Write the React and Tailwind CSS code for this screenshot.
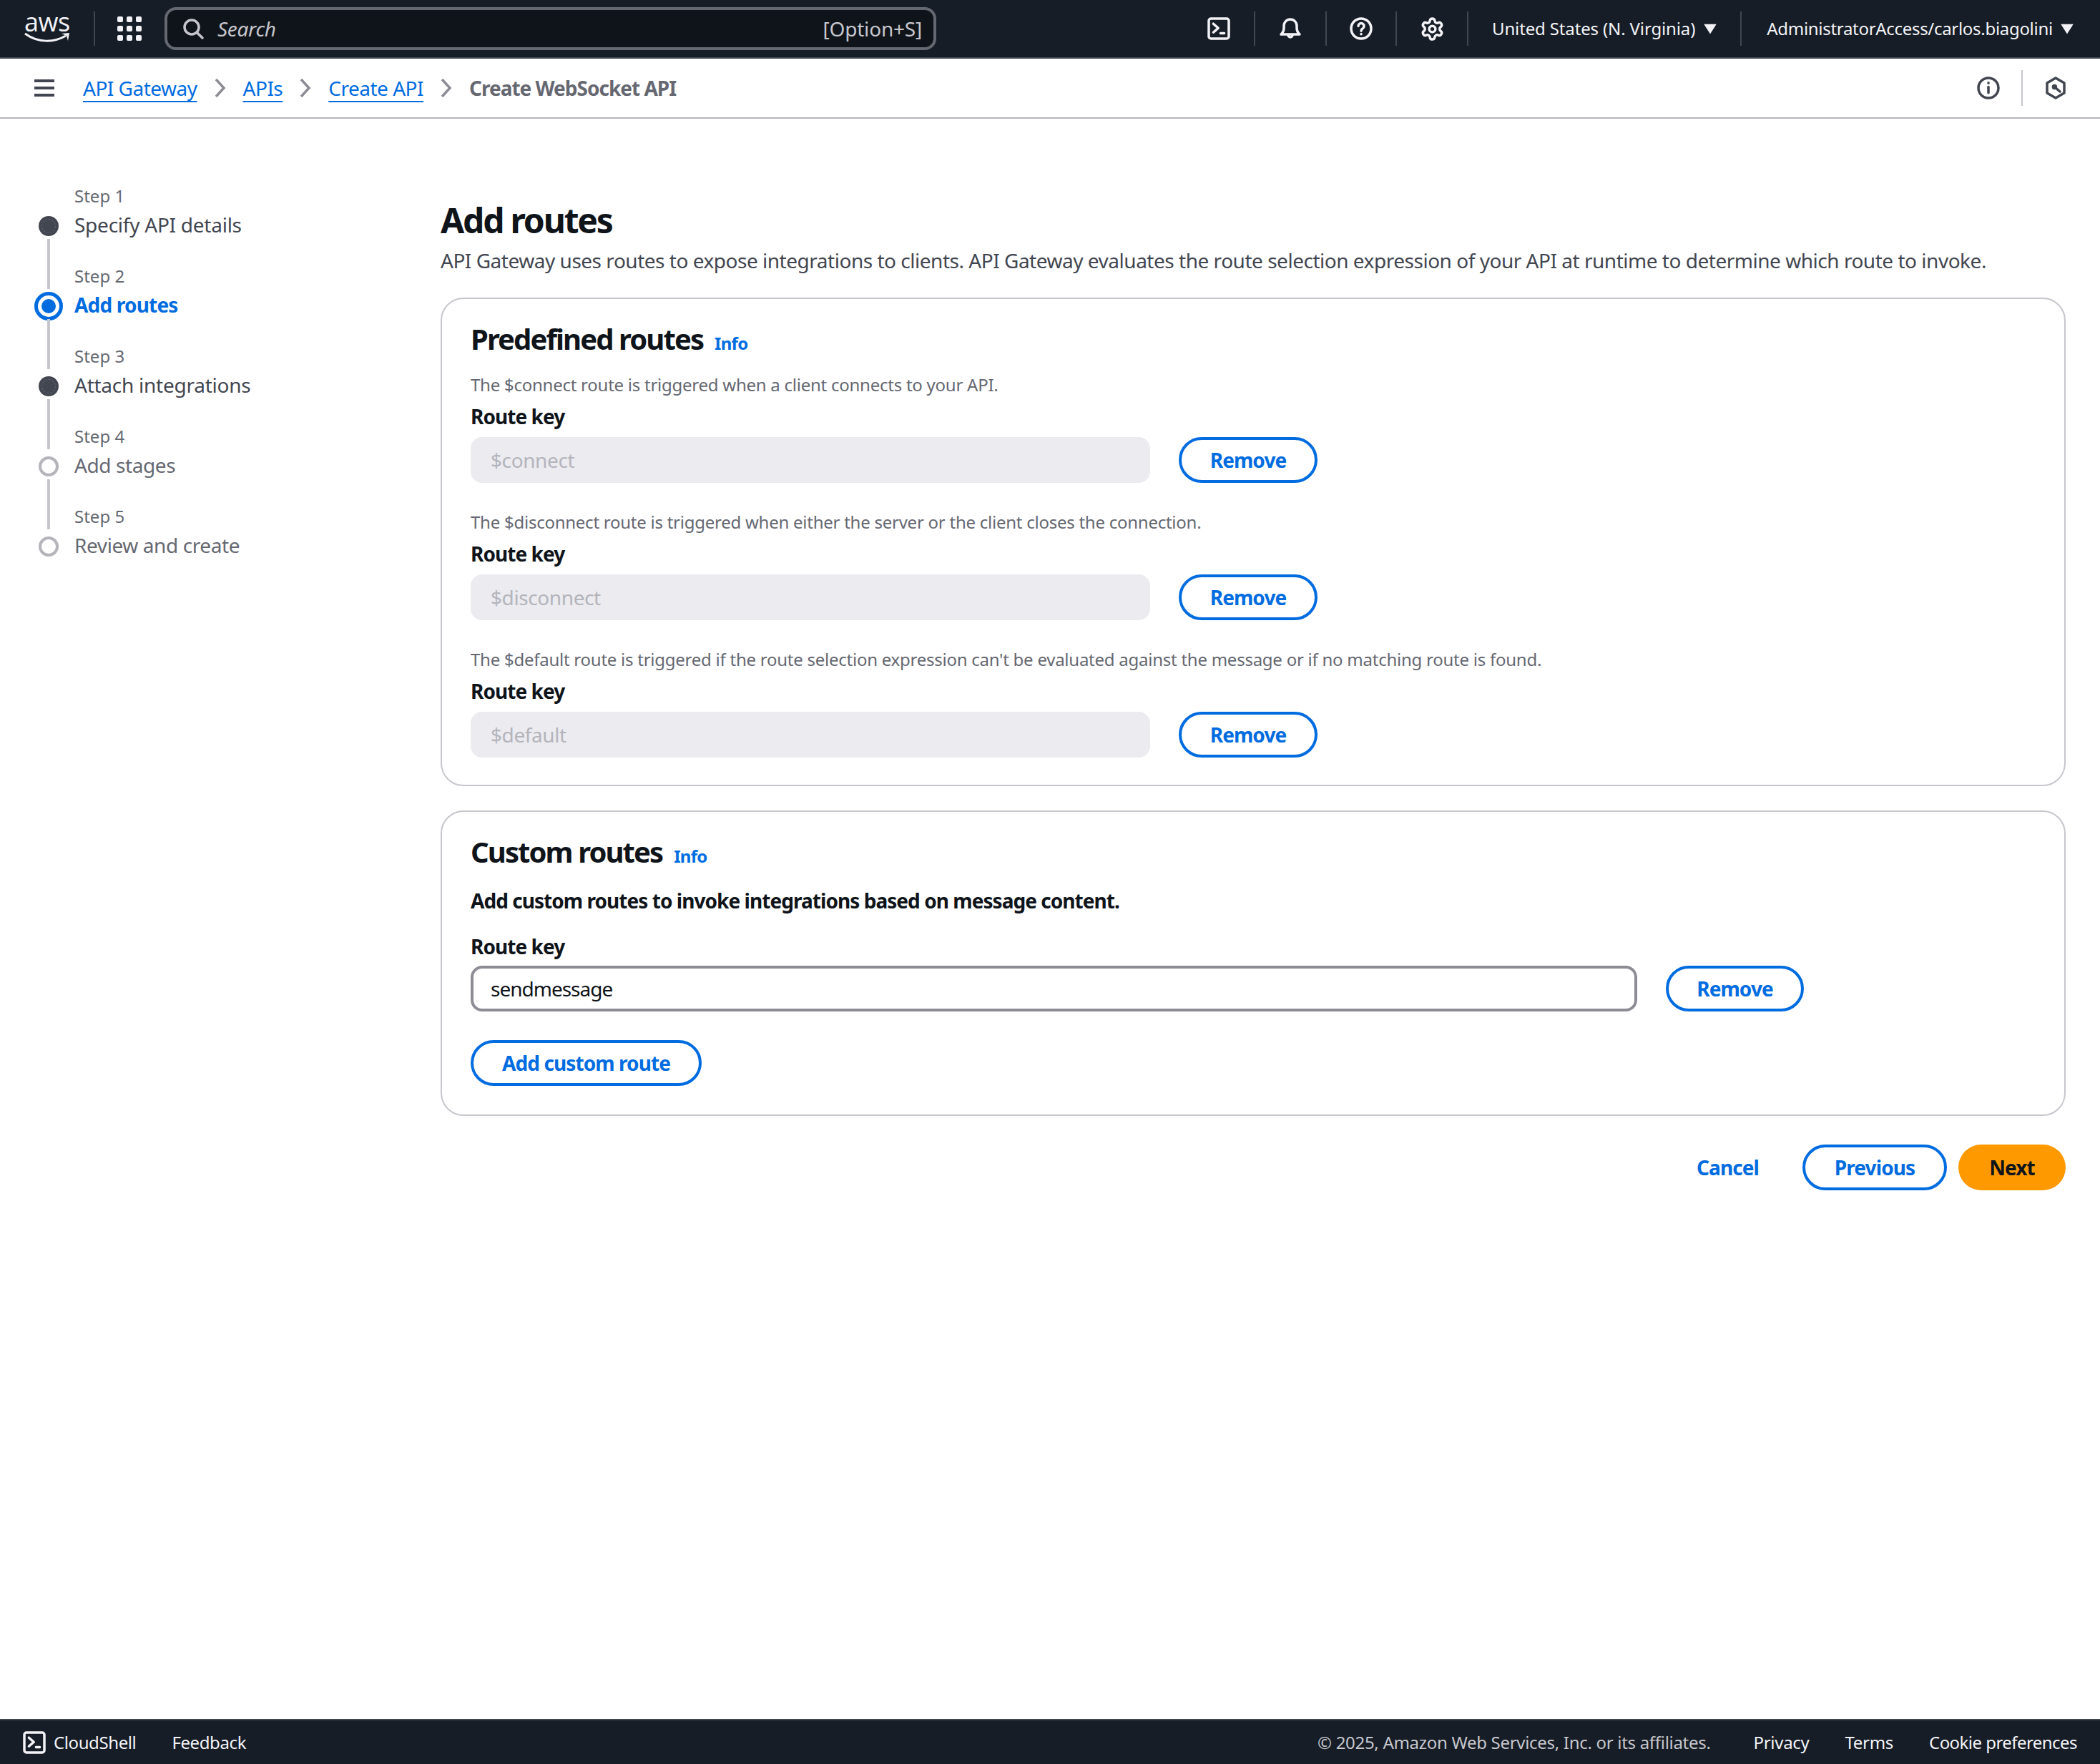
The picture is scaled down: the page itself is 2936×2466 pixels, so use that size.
import React from 'react';
import { Settings } from 'lucide-react';

const font = { fontFamily: '"Noto Sans", sans-serif' };

function Icon({ children, className = 'w-8 h-8' }) {
  return (
    <svg viewBox="0 0 16 16" fill="none" stroke="currentColor" strokeWidth="1.75" strokeLinecap="round" strokeLinejoin="round" className={className}>
      {children}
    </svg>
  );
}

const TerminalIcon = ({ className }) => (
  <Icon className={className}>
    <rect x="1" y="1" width="14" height="14" rx="1.5" />
    <path d="M4.2 4.6 7.6 7.6 4.2 10.6M9.2 11.2h2.6" />
  </Icon>
);

const Caret = () => (
  <svg viewBox="0 0 16 16" className="w-5 h-5 fill-[#f3f3f7]"><path d="M1 3h14L8 14z" /></svg>
);

const Chevron = () => (
  <svg viewBox="0 0 16 28" className="w-4 h-7 text-[#8c8c94]" fill="none" stroke="currentColor" strokeWidth="3.5"><path d="M2 2 13 14 2 26" /></svg>
);

const Divider = () => <div className="w-0.5 h-12 bg-[#424650]" />;

function TopBar() {
  return (
    <header className="h-[82px] shrink-0 bg-[#161d26] border-b-2 border-[#414750] flex items-center text-[#f3f3f7]">
      <div className="w-[131px] pl-[34px] flex flex-col items-start">
        <span className="text-[36px] leading-[30px] font-normal -mt-1 tracking-[-0.5px]" style={{ fontFamily: '"Open Sans", sans-serif' }}>aws</span>
        <svg viewBox="0 0 64 16" className="w-[64px] h-4 -mt-px">
          <path d="M1 2c18 13 40 13 57 3" fill="none" stroke="#f3f3f7" strokeWidth="3" />
          <path d="M52 2l11-1-2 11-2-7z" fill="#f3f3f7" />
        </svg>
      </div>
      <Divider />
      <div className="ml-[31px] w-[34px] grid grid-cols-3 gap-[5px]">
        {Array.from({ length: 9 }).map((_, i) => (
          <div key={i} className="w-2 h-2 rounded-[2px] bg-[#f3f3f7]" />
        ))}
      </div>
      <div className="ml-[32px] w-[1079px] h-[60px] rounded-2xl border-4 border-[#656871] bg-[#0f141a] flex items-center pl-5 pr-4 text-[#c6c6cd]">
        <Icon className="w-8 h-8 text-[#c6c6cd]">
          <circle cx="7" cy="7" r="5" />
          <path d="M10.7 10.7 14.5 14.5" />
        </Icon>
        <span className="ml-[18px] italic text-[28px] tracking-[-0.3px]">Search</span>
        <span className="ml-auto text-[28px] tracking-[-0.2px]">[Option+S]</span>
      </div>
      <div className="ml-[346px] flex items-center">
        <div className="w-[98px] flex justify-center"><TerminalIcon /></div>
        <Divider />
        <div className="w-[98px] flex justify-center">
          <Icon>
            <path d="M1.5 12h13c-1.6-1.4-2-2.6-2-4.5V6a4.5 4.5 0 0 0-9 0v1.5c0 1.9-.4 3.1-2 4.5Z" />
            <path d="M6.5 12.5a1.5 1.5 0 0 0 3 0" />
          </Icon>
        </div>
        <Divider />
        <div className="w-[96px] flex justify-center">
          <Icon>
            <circle cx="8" cy="8" r="7" />
            <path d="M6 6.2a2 2 0 1 1 3 1.8c-.7.4-1 .8-1 1.6M8 11.8v.1" />
          </Icon>
        </div>
        <Divider />
        <div className="w-[98px] flex justify-center">
          <Settings size={35} strokeWidth={2.4} />
        </div>
        <Divider />
        <div className="pl-[33px] pr-[32px] flex items-center gap-[11px] text-[24px] tracking-[-0.14px] whitespace-nowrap">
          <span>United States (N. Virginia)</span>
          <Caret />
        </div>
        <Divider />
        <div className="pl-[35px] flex items-center gap-[10px] text-[24px] tracking-[-0.3px] whitespace-nowrap">
          <span>AdministratorAccess/carlos.biagolini</span>
          <Caret />
        </div>
      </div>
    </header>
  );
}

function Breadcrumbs() {
  return (
    <div className="h-[84px] shrink-0 border-b-2 border-[#b4b4bb] flex items-center pl-12 pr-[46px] text-[28px] tracking-[-0.5px]">
      <svg viewBox="0 0 28 24" className="w-7 h-6 text-[#424650]" fill="currentColor">
        <rect y="0" width="28" height="4" /><rect y="10" width="28" height="4" /><rect y="20" width="28" height="4" />
      </svg>
      <a className="ml-10 text-[#006ce0] underline underline-offset-[7px] decoration-2">API Gateway</a>
      <span className="mx-6"><Chevron /></span>
      <a className="text-[#006ce0] underline underline-offset-[7px] decoration-2">APIs</a>
      <span className="mx-6"><Chevron /></span>
      <a className="text-[#006ce0] underline underline-offset-[7px] decoration-2">Create API</a>
      <span className="mx-6"><Chevron /></span>
      <span className="font-bold text-[#656871] tracking-[-1px]">Create WebSocket API</span>
      <div className="ml-auto flex items-center text-[#424650]">
        <Icon>
          <circle cx="8" cy="8" r="7" />
          <path d="M8 7.2v4.2M8 4.4v.2" />
        </Icon>
        <div className="w-0.5 h-[50px] bg-[#c6c6cd] mx-[30px]" />
        <Icon>
          <path d="M8 1 14 4.5v7L8 15 2 11.5v-7z" />
          <circle cx="7.2" cy="7.2" r="1" fill="currentColor" />
          <path d="M7.5 7.5 11 10.5" />
        </Icon>
      </div>
    </div>
  );
}

const steps = [
  { n: 1, title: 'Specify API details', state: 'done' },
  { n: 2, title: 'Add routes', state: 'active' },
  { n: 3, title: 'Attach integrations', state: 'done' },
  { n: 4, title: 'Add stages', state: 'todo' },
  { n: 5, title: 'Review and create', state: 'todo' },
];

function StepDot({ state }) {
  if (state === 'active') {
    return (
      <div className="w-10 h-10 rounded-full border-[5px] border-[#006ce0] flex items-center justify-center">
        <div className="w-[20px] h-[20px] rounded-full bg-[#006ce0]" />
      </div>
    );
  }
  if (state === 'done') {
    return (
      <div className="w-7 h-7 rounded-full bg-[#424650] flex items-center justify-center">
        <div className="w-[20px] h-[20px] rounded-full border border-dashed border-[#656871]" />
      </div>
    );
  }
  return <div className="w-7 h-7 rounded-full border-4 border-[#b4b4bb] bg-white" />;
}

function Stepper() {
  return (
    <nav className="w-[616px] shrink-0 pl-12 pt-[88px]">
      {steps.map((s, i) => (
        <div key={s.n} className="h-[112px] flex">
          <div className="w-10 pt-[42px]">
            <div className="h-10 w-10 flex items-center justify-center relative">
              <StepDot state={s.state} />
              {i < steps.length - 1 && (
                <div className="absolute left-[18px] top-[38px] w-1 h-[70px] bg-[#c6c6cd]" />
              )}
            </div>
          </div>
          <div className="ml-[16px]">
            <div className="h-[40px] text-[24px] leading-[40px] text-[#656871]">Step {s.n}</div>
            <div className={'text-[28px] leading-[40px] ' + (s.state === 'active' ? 'font-bold tracking-[-0.8px] text-[#006ce0]' : s.state === 'done' ? 'tracking-[-0.25px] text-[#424650]' : 'tracking-[-0.4px] text-[#656871]')}>
              {s.title}
            </div>
          </div>
        </div>
      ))}
    </nav>
  );
}

function Button({ children, className = '' }) {
  return (
    <button className={'h-16 rounded-[40px] border-4 border-[#006ce0] bg-white text-[#006ce0] text-[28px] font-bold tracking-[-0.9px] flex items-center justify-center whitespace-nowrap ' + className}>
      {children}
    </button>
  );
}

function CardTitle({ title }) {
  return (
    <div className="flex items-baseline gap-4 h-[56px]">
      <h2 className="text-[40px] leading-[56px] font-bold tracking-[-1.9px] text-[#0f141a]">{title}</h2>
      <a className="text-[24px] font-bold tracking-[-0.7px] text-[#006ce0]">Info</a>
    </div>
  );
}

function PredefinedRoute({ desc, value }) {
  return (
    <div className="h-[192px]">
      <p className="text-[24px] leading-[32px] tracking-[-0.25px] text-[#656871]">{desc}</p>
      <div className="mt-[12px] text-[28px] leading-[32px] font-bold tracking-[-0.95px] text-[#0f141a]">Route key</div>
      <div className="mt-[13px] flex items-center gap-10">
        <div className="w-[950px] h-16 rounded-2xl bg-[#ebebf0] flex items-center px-7 text-[28px] tracking-[-0.4px] text-[#b4b4bb]">{value}</div>
        <Button className="w-[194px]">Remove</Button>
      </div>
    </div>
  );
}

export default function App() {
  return (
    <div className="min-h-screen flex flex-col bg-white" style={font}>
      <TopBar />
      <Breadcrumbs />
      <main className="flex-1 flex">
        <Stepper />
        <div className="w-[2272px] pt-[112px]">
          <h1 className="text-[48px] leading-[60px] font-bold tracking-[-2.2px] text-[#0f141a]">Add routes</h1>
          <p className="mt-[6px] text-[28px] leading-[40px] tracking-[-0.48px] text-[#424650] whitespace-nowrap">
            API Gateway uses routes to expose integrations to clients. API Gateway evaluates the route selection expression of your API at runtime to determine which route to invoke.
          </p>

          <section className="mt-[32px] h-[683px] rounded-[32px] border-2 border-[#c6c6cd] px-10 pt-[28px]">
            <CardTitle title="Predefined routes" />
            <div className="mt-[20px]">
              <PredefinedRoute desc="The $connect route is triggered when a client connects to your API." value="$connect" />
              <PredefinedRoute desc="The $disconnect route is triggered when either the server or the client closes the connection." value="$disconnect" />
              <PredefinedRoute desc="The $default route is triggered if the route selection expression can't be evaluated against the message or if no matching route is found." value="$default" />
            </div>
          </section>

          <section className="mt-[34px] h-[427px] rounded-[32px] border-2 border-[#c6c6cd] px-10 pt-[28px]">
            <CardTitle title="Custom routes" />
            <p className="mt-[20px] text-[28px] leading-[40px] font-bold tracking-[-0.95px] text-[#0f141a]">Add custom routes to invoke integrations based on message content.</p>
            <div className="mt-[24px] text-[28px] leading-[40px] font-bold tracking-[-0.95px] text-[#0f141a]">Route key</div>
            <div className="mt-[7px] flex items-center gap-10">
              <div className="w-[1631px] h-16 rounded-2xl border-4 border-[#8c8c94] flex items-center px-6 text-[28px] tracking-[-1px] text-[#0f141a]">sendmessage</div>
              <Button className="w-[193px]">Remove</Button>
            </div>
            <Button className="mt-10 w-[323px]">Add custom route</Button>
          </section>

          <div className="mt-10 flex items-center justify-end">
            <a className="mr-[61px] text-[28px] font-bold tracking-[-0.9px] text-[#006ce0]">Cancel</a>
            <Button className="w-[202px]">Previous</Button>
            <button className="ml-4 w-[150px] h-16 rounded-[40px] bg-[#ff9900] text-[28px] font-bold tracking-[-0.9px] text-[#0f141a]">Next</button>
          </div>
        </div>
      </main>
      <footer className="h-[63px] shrink-0 bg-[#161d26] border-t-2 border-[#414750] flex items-center pl-8 pr-8 text-[24px] tracking-[-0.3px] text-[#f3f3f7]">
        <TerminalIcon className="w-8 h-8" />
        <span className="ml-[11px] tracking-[-0.4px]">CloudShell</span>
        <span className="ml-[50px] tracking-[-0.4px]">Feedback</span>
        <span className="ml-auto text-[#c6c6cd]">© 2025, Amazon Web Services, Inc. or its affiliates.</span>
        <span className="ml-[60px]">Privacy</span>
        <span className="ml-[50px]">Terms</span>
        <span className="ml-[50px] tracking-[-0.55px]">Cookie preferences</span>
      </footer>
    </div>
  );
}
